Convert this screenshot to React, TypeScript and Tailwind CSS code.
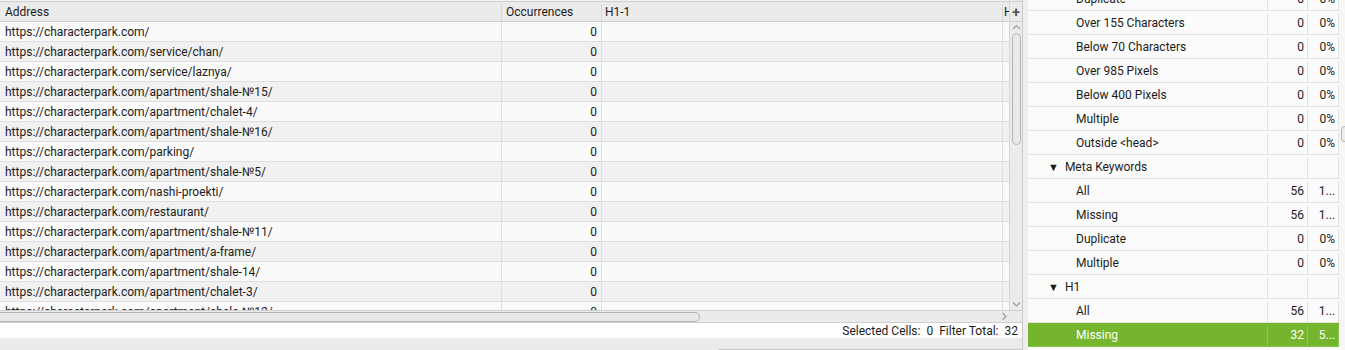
import React from "react";

// Data
const urls = [
    "https://characterpark.com/",
    "https://characterpark.com/service/chan/",
    "https://characterpark.com/service/laznya/",
    "https://characterpark.com/apartment/shale-№15/",
    "https://characterpark.com/apartment/chalet-4/",
    "https://characterpark.com/apartment/shale-№16/",
    "https://characterpark.com/parking/",
    "https://characterpark.com/apartment/shale-№5/",
    "https://characterpark.com/nashi-proekti/",
    "https://characterpark.com/restaurant/",
    "https://characterpark.com/apartment/shale-№11/",
    "https://characterpark.com/apartment/a-frame/",
    "https://characterpark.com/apartment/shale-14/",
    "https://characterpark.com/apartment/chalet-3/",
    "https://characterpark.com/apartment/shale-№12/",
];

interface SideRow {
    label: string;
    count?: string;
    pct?: string;
    group?: boolean;
    selected?: boolean;
}

const sideRows: SideRow[] = [
    { label: "Duplicate", count: "0", pct: "0%" },
    { label: "Over 155 Characters", count: "0", pct: "0%" },
    { label: "Below 70 Characters", count: "0", pct: "0%" },
    { label: "Over 985 Pixels", count: "0", pct: "0%" },
    { label: "Below 400 Pixels", count: "0", pct: "0%" },
    { label: "Multiple", count: "0", pct: "0%" },
    { label: "Outside <head>", count: "0", pct: "0%" },
    { label: "Meta Keywords", group: true },
    { label: "All", count: "56", pct: "1..." },
    { label: "Missing", count: "56", pct: "1..." },
    { label: "Duplicate", count: "0", pct: "0%" },
    { label: "Multiple", count: "0", pct: "0%" },
    { label: "H1", group: true },
    { label: "All", count: "56", pct: "1..." },
    { label: "Missing", count: "32", pct: "5...", selected: true },
    { label: "Duplicate", count: "0", pct: "0%" },
];

const Chevron: React.FC<{ dir: "up" | "down" | "right" }> = ({ dir }) => {
    const d =
        dir === "up" ? "M1 5 L4.5 1.5 L8 5" : dir === "down" ? "M1 1.5 L4.5 5 L8 1.5" : "M1.5 1 L5 4.5 L1.5 8";
    const w = dir === "right" ? 7 : 9;
    const h = dir === "right" ? 9 : 7;
    return (
        <svg width={w} height={h} viewBox={`0 0 ${w} ${h}`} fill="none">
            <path d={d} stroke="#9a9a9a" strokeWidth="1.1" />
        </svg>
    );
};

export default function App() {
    return (
        <div className="flex h-[350px] w-[1345px] overflow-hidden bg-[#ebebeb] font-['Roboto',sans-serif] text-[12px] text-[#1c1c1c]">
            {/* Left: data table */}
            <div className="flex w-[1023px] shrink-0 flex-col border-r border-[#c9c9c9]">
                <div className="flex h-[310px]">
                    <div className="flex w-[1009px] flex-col overflow-hidden bg-[#f4f4f4]">
                        {/* header */}
                        <div className="mt-px flex h-[21px] shrink-0 border-y border-[#cfcfcf] bg-[#ebebeb] pt-[2px] leading-[17px]">
                            <div className="w-[502px] shrink-0 border-r border-[#d8d8d8] px-[5px]">Address</div>
                            <div className="w-[100px] shrink-0 border-r border-[#d8d8d8] px-[4px]">Occurrences</div>
                            <div className="w-[401px] shrink-0 border-r border-[#d8d8d8] px-[3px]">H1-1</div>
                            <div className="w-[6px] shrink-0 overflow-hidden pl-px">H</div>
                        </div>
                        {urls.map((u, i) => (
                            <div
                                key={i}
                                className={`flex h-[20px] shrink-0 border-b border-[#dedede] leading-[19px] ${
                                    i % 2 === 0 ? "bg-[#fafafa]" : "bg-[#f1f1f1]"
                                }`}
                            >
                                <div className="w-[502px] shrink-0 truncate border-r border-[#dedede] px-[5px] pt-[2px] leading-[17px]">{u}</div>
                                <div className="w-[100px] shrink-0 border-r border-[#dedede] pr-[4px] pt-[2px] text-right leading-[17px]">0</div>
                                <div className="w-[401px] shrink-0 border-r border-[#dedede]"></div>
                                <div className="w-[6px] shrink-0"></div>
                            </div>
                        ))}
                    </div>
                    {/* vertical scrollbar */}
                    <div className="flex w-[13px] flex-col border-l border-[#d6d6d6] bg-[#ebebeb]">
                        <div className="mt-px flex h-[21px] items-center justify-center border-y border-[#cfcfcf] text-[14px] font-bold leading-none text-[#555]">
                            +
                        </div>
                        <div className="flex h-[10px] items-center justify-center">
                            <Chevron dir="up" />
                        </div>
                        <div className="mx-auto mt-px h-[112px] w-[9px] rounded-[5px] border border-[#b4b4b4] bg-[#e9e9e9]"></div>
                        <div className="flex-1"></div>
                        <div className="flex h-[10px] items-center justify-center pb-[2px]">
                            <Chevron dir="down" />
                        </div>
                    </div>
                </div>
                {/* horizontal scrollbar */}
                <div className="flex h-[12px] border-t border-[#d0d0d0]">
                    <div className="flex w-[1009px] items-center">
                        <div className="h-[10px] w-[700px] rounded-r-[5px] border border-l-0 border-[#b4b4b4] bg-[#e9e9e9]"></div>
                        <div className="flex-1"></div>
                        <div className="flex w-[8px] items-center">
                            <Chevron dir="right" />
                        </div>
                    </div>
                    <div className="w-[13px]"></div>
                </div>
                {/* status */}
                <div className="flex h-[16px] items-center justify-end gap-[6px] border-t border-[#cfcfcf] bg-white pr-[4px] pt-px leading-[15px]">
                    <span>Selected Cells:</span>
                    <span>0</span>
                    <span>Filter Total:</span>
                    <span>32</span>
                </div>
                <div className="flex flex-1 items-end">
                    <div className="ml-[718px] h-px flex-1 bg-[#c8c8c8]"></div>
                </div>
            </div>

            {/* splitter */}
            <div className="w-[5px] shrink-0 bg-[#eeeeee]"></div>

            {/* Right: overview tree */}
            <div className="flex flex-1 overflow-hidden bg-[#fbfbfb]">
                <div className="flex w-[311px] shrink-0 flex-col">
                    <div className="mt-[-13px] flex flex-col">
                        {sideRows.map((r, i) => (
                            <div
                                key={i}
                                className={`flex h-[24px] shrink-0 border-b pt-[2px] leading-[21px] ${
                                    r.selected ? "border-[#8cc454] bg-[#74b52d] text-white" : "border-[#e2e2e2]"
                                }`}
                            >
                                <div
                                    className={`flex w-[240px] shrink-0 items-center border-r ${
                                        r.selected ? "border-[#8cc454]" : "border-[#e2e2e2]"
                                    } ${r.group ? "pl-[20px]" : "pl-[48px]"}`}
                                >
                                    {r.group && <span className="mr-[6px] text-[11px] leading-none">▼</span>}
                                    <span>{r.label}</span>
                                </div>
                                <div
                                    className={`w-[40px] shrink-0 border-r pr-[3px] text-right ${
                                        r.selected ? "border-[#8cc454]" : "border-[#e2e2e2]"
                                    }`}
                                >
                                    {r.count}
                                </div>
                                <div
                                    className={`w-[31px] shrink-0 border-r pr-[3px] text-right ${
                                        r.selected ? "border-[#8cc454]" : "border-[#e2e2e2]"
                                    }`}
                                >
                                    {r.pct}
                                </div>
                            </div>
                        ))}
                    </div>
                </div>
                {/* right scrollbar edge */}
                <div className="flex flex-1 flex-col bg-[#f6f6f6]">
                    <div className="ml-[2px] mt-[126px] h-[16px] flex-none rounded-l-[4px] border border-r-0 border-[#b8b8b8] bg-[#eeeeee]"></div>
                </div>
            </div>
        </div>
    );
}
